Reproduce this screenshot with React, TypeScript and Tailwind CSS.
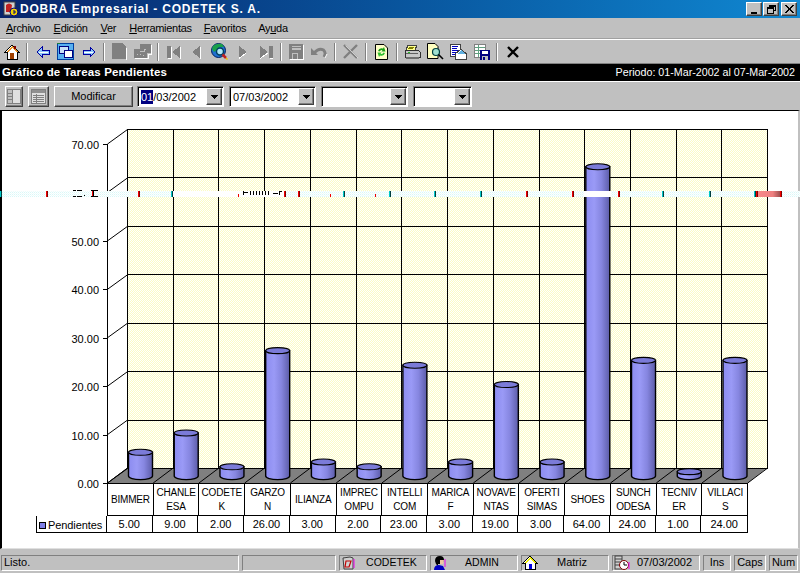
import React from "react";

const raised = "border border-t-white border-l-white border-r-[#404040] border-b-[#404040] shadow-[inset_-1px_-1px_0_#808080]";
const sunken = "border border-t-[#808080] border-l-[#808080] border-r-white border-b-white";

const Sep = () => (
  <div className="w-[8px] h-[18px] flex justify-center">
    <div className="w-[2px] h-full border-l border-l-[#808080] border-r border-r-white" />
  </div>
);

const Ic = ({ children, w = 16, h = 16 }: { children: React.ReactNode; w?: number; h?: number }) => (
  <svg width={w} height={h} viewBox={`0 0 ${w} ${h}`} shapeRendering="crispEdges">{children}</svg>
);

const Home = () => (
  <Ic>
    <path d="M8 1 L15 8 L13 8 L13 15 L3 15 L3 8 L1 8 Z" fill="#fff" stroke="#000" />
    <path d="M8 2 L14 8 L12 8 L8 4 L4 8 L2 8 Z" fill="#e89020" />
    <rect x="6" y="9" width="4" height="6" fill="#a04000" />
    <rect x="10" y="2" width="2" height="3" fill="#800000" />
  </Ic>
);
const ArrowL = () => (
  <Ic w={14} h={12}>
    <path d="M1 6 L6 1 L6 4 L13 4 L13 8 L6 8 L6 11 Z" fill="#8cc8f8" stroke="#0000a0" />
    <path d="M3 6 L12 6" stroke="#fff" />
  </Ic>
);
const ArrowR = () => (
  <Ic w={14} h={12}>
    <path d="M13 6 L8 1 L8 4 L1 4 L1 8 L8 8 L8 11 Z" fill="#8cc8f8" stroke="#0000a0" />
    <path d="M2 6 L11 6" stroke="#fff" />
  </Ic>
);
const Win = () => (
  <Ic w={17} h={17}>
    <rect x="0.5" y="0.5" width="16" height="16" fill="#58b0f0" stroke="#0040a0" />
    <rect x="0" y="0" width="3" height="1" fill="#208040" />
    <rect x="2" y="3" width="9" height="7" fill="#c8e0f8" stroke="#000080" />
    <rect x="7" y="7" width="8" height="7" fill="#fff" stroke="#000080" />
    <rect x="2" y="3" width="9" height="1" fill="#000080" />
    <rect x="7" y="7" width="8" height="1" fill="#000080" />
  </Ic>
);
const GrayDoc = () => (
  <Ic w={15} h={17}>
    <path d="M0 0 H10 L14 4 V16 H0 Z" fill="#808080" />
    <path d="M14 5 V17 H1" stroke="#fff" fill="none" />
  </Ic>
);
const GrayDocs = () => (
  <Ic w={18} h={15}>
    <path d="M6 0 H17 V9 H13 V14 H0 V5 H6 Z" fill="#808080" />
    <path d="M1 14.5 H14 V10 M17.5 1 V10 H14" stroke="#fff" fill="none" />
    <path d="M3 10 h1 M6 10 h1 M9 11 h1 M6 7 h4 V5 h2" stroke="#c0c0c0" fill="none" />
  </Ic>
);
const First = () => (
  <Ic w={14} h={14}>
    <path d="M0 1 H4 V13 H0 Z M13 1 V13 L5 7 Z" fill="#808080" />
    <path d="M4.5 2 V13.5 H1 M13.5 2 V13.5" stroke="#fff" fill="none" />
  </Ic>
);
const Last = () => (
  <Ic w={14} h={14}>
    <path d="M10 1 H14 V13 H10 Z M1 1 V13 L9 7 Z" fill="#808080" />
    <path d="M14.5 2 V13.5 H11 M1 13.5 L9 8" stroke="#fff" fill="none" />
  </Ic>
);
const Prev = () => (
  <Ic w={9} h={14}>
    <path d="M8 1 V13 L0 7 Z" fill="#808080" />
    <path d="M8.5 2 V13.5" stroke="#fff" />
  </Ic>
);
const Next = () => (
  <Ic w={9} h={14}>
    <path d="M1 1 V13 L9 7 Z" fill="#808080" />
    <path d="M1 13.5 L8 8" stroke="#fff" />
  </Ic>
);
const Globe = () => (
  <svg width="17" height="17" viewBox="0 0 17 17">
    <circle cx="7.5" cy="7.5" r="7" fill="#2070d0" stroke="#002060" />
    <path d="M2 3 Q6 0 11 1 L13 4 L8 4 L6 7 L3 9 L1 6 Z" fill="#18a048" />
    <circle cx="9" cy="8.5" r="3.5" fill="#b0e8f8" stroke="#004060" strokeWidth="1.5" />
    <path d="M11.5 11.5 L15 15" stroke="#c02020" strokeWidth="2.5" />
    <path d="M15 15 l1.5 1.5" stroke="#f0c000" strokeWidth="1.5" />
  </svg>
);
const GraySave = () => (
  <Ic w={15} h={16}>
    <rect x="0" y="0" width="14" height="15" fill="#808080" />
    <rect x="3" y="2" width="9" height="4" fill="#c0c0c0" />
    <rect x="3" y="3" width="9" height="1" fill="#808080" />
    <rect x="3" y="9" width="6" height="6" fill="#c0c0c0" />
    <rect x="4" y="10" width="4" height="5" fill="#808080" />
    <path d="M14.5 1 V15.5 H1" stroke="#fff" fill="none" />
  </Ic>
);
const Undo = () => (
  <svg width="17" height="13" viewBox="0 0 17 13">
    <path d="M3.5 7.5 Q8 2.5 12.5 5 Q15.5 8 13 12" fill="none" stroke="#808080" strokeWidth="3" />
    <path d="M0 3 L0 10 L7 10 Z" fill="#808080" />
    <path d="M14 13 L16 9" stroke="#fff" strokeWidth="1" />
  </svg>
);
const GrayX = () => (
  <svg width="15" height="15" viewBox="0 0 15 15">
    <path d="M1 1 L14 14 M14 1 L1 14" stroke="#808080" strokeWidth="2.4" />
    <path d="M2.5 1.5 L15 14" stroke="#fff" strokeWidth="0.6" />
  </svg>
);
const Refresh = () => (
  <svg width="13" height="16" viewBox="0 0 13 16">
    <path d="M0.5 0.5 H9 L12.5 4 V15.5 H0.5 Z" fill="#ffffc8" stroke="#000" />
    <path d="M3 7 Q4 3.5 8 4.5 L9 3 L10.5 7.5 L6.5 7.5 L7.5 6 Q5.5 5.5 4.5 7.5 Z" fill="#18a018" />
    <path d="M10 9 Q9 12.5 5 11.5 L4 13 L2.5 8.5 L6.5 8.5 L5.5 10 Q7.5 10.5 8.5 8.5 Z" fill="#30c030" />
  </svg>
);
const Printer = () => (
  <Ic w={17} h={16}>
    <path d="M4 1 H13 L11 6 H2 Z" fill="#ffff90" stroke="#404040" />
    <path d="M5 3 h5 M4 4 h5" stroke="#808000" />
    <path d="M1 6 H14 L16 8 V13 H1 Z" fill="#c8c8c8" stroke="#303030" />
    <rect x="2" y="9" width="12" height="1" fill="#606060" />
    <rect x="4" y="8" width="2" height="1" fill="#20c020" />
    <rect x="2" y="13" width="13" height="2" fill="#707070" />
  </Ic>
);
const Preview = () => (
  <svg width="17" height="17" viewBox="0 0 17 17">
    <path d="M0.5 0.5 H8 L11 3.5 V15.5 H0.5 Z" fill="#ffffc0" stroke="#000" />
    <circle cx="9" cy="9" r="3.5" fill="#a0e0d0" stroke="#004040" strokeWidth="1.2" />
    <path d="M11.5 11.5 L16 16" stroke="#000" strokeWidth="1.6" />
  </svg>
);
const Mail = () => (
  <Ic w={17} h={16}>
    <rect x="0.5" y="0.5" width="10" height="12" fill="#fff" stroke="#404040" />
    <path d="M2 2 h6 M2 4 h5 M2 6 h6 M2 8 h4 M2 10 h4" stroke="#0000c0" />
    <path d="M5 15.5 V10 L11 5 L16.5 10 V15.5 Z" fill="#fff" stroke="#404040" />
    <path d="M7 10 L11 6 L15 10 Z" fill="#60b0e0" />
  </Ic>
);
const SaveDb = () => (
  <Ic w={16} h={16}>
    <rect x="0.5" y="0.5" width="11" height="13" fill="#fff" stroke="#808080" />
    <path d="M1 3 h10 M1 6 h7 M1 9 h6 M4 1 v12" stroke="#60a080" />
    <rect x="6" y="6" width="10" height="10" fill="#000080" />
    <rect x="8" y="7" width="6" height="3" fill="#fff" />
    <rect x="8" y="12" width="6" height="4" fill="#c0c0c0" />
    <rect x="9" y="13" width="2" height="3" fill="#000080" />
  </Ic>
);
const CloseX = () => (
  <svg width="12" height="12" viewBox="0 0 12 12">
    <path d="M1 1 L11 11 M11 1 L1 11" stroke="#000" strokeWidth="2.4" />
  </svg>
);

const Btn = ({ children }: { children: React.ReactNode }) => (
  <div className="w-[23px] h-[23px] flex items-center justify-center">{children}</div>
);

const TitleBtn = ({ children, cls }: { children: React.ReactNode; cls: string }) => (
  <div className={`w-[16px] h-[14px] bg-[#c0c0c0] flex items-center justify-center ${raised} ${cls}`}>{children}</div>
);

const Combo = ({ w, value, sel }: { w: string; value?: string; sel?: boolean }) => (
  <div className={`${w} h-[21px] bg-white flex items-center ${sunken} shadow-[inset_1px_1px_0_#000]`}>
    <div className="flex-1 pl-[3px] pt-px text-[11px] leading-none text-black whitespace-nowrap">
      {sel ? <><span className="bg-[#000080] text-white py-px">01</span>/03/2002</> : value}
    </div>
    <div className={`w-[16px] h-[17px] mr-px bg-[#c0c0c0] flex items-center justify-center ${raised}`}>
      <svg width="7" height="4" viewBox="0 0 7 4" shapeRendering="crispEdges"><path d="M0 0 H7 L3.5 4 Z" fill="#000" /></svg>
    </div>
  </div>
);

const Panel = ({ w, children, cls = "" }: { w: string; children?: React.ReactNode; cls?: string }) => (
  <div className={`${w} h-[16px] flex items-center text-[11px] leading-none text-black ${sunken} ${cls}`}>{children}</div>
);

const values = [5, 9, 2, 26, 3, 2, 23, 3, 19, 3, 64, 24, 1, 24];
const names: [string, string?][] = [
  ["BIMMER"], ["CHANLE", "ESA"], ["CODETE", "K"], ["GARZO", "N"], ["ILIANZA"], ["IMPREC", "OMPU"], ["INTELLI", "COM"],
  ["MARICA", "F"], ["NOVAVE", "NTAS"], ["OFERTI", "SIMAS"], ["SHOES"], ["SUNCH", "ODESA"], ["TECNIV", "ER"], ["VILLACI", "S"],
];
const STEP = 45.73;
const redTicks = [46, 92, 138, 284, 298, 526, 572, 618, 756, 780];
const cyanTicks = [0, 171, 343, 389, 434, 480, 662, 709, 754];
const smallRed = [238, 330, 375];

function Chart() {
  const wallY = Array.from({ length: 8 }, (_, i) => 130 + i * 48.43);
  const cols = Array.from({ length: 15 }, (_, i) => i);
  return (
    <svg width="796" height="372" viewBox="2 112 796 372" className="block overflow-visible">
      <defs>
        <pattern id="wall" width="2" height="2" patternUnits="userSpaceOnUse">
          <rect width="2" height="2" fill="#fff" />
          <rect width="1" height="1" fill="#fcfcc4" />
          <rect x="1" y="1" width="1" height="1" fill="#fcfcc4" />
        </pattern>
        <linearGradient id="bar" x1="0" x2="1" y1="0" y2="0">
          <stop offset="0" stopColor="#8c8cf0" />
          <stop offset="0.35" stopColor="#9a9af6" />
          <stop offset="0.65" stopColor="#8686e0" />
          <stop offset="1" stopColor="#5c5ca8" />
        </linearGradient>
      </defs>
      <rect x="127" y="130" width="640" height="339" fill="url(#wall)" />
      <polygon points="107,484 127,469 767,469 748,484" fill="#808080" />
      <g stroke="#000" shapeRendering="crispEdges" fill="none">
        {wallY.map((y) => <line key={y} x1="127" x2="767.5" y1={Math.round(y) + 0.5} y2={Math.round(y) + 0.5} />)}
        {cols.map((i) => <line key={i} x1={Math.round(127 + i * STEP) + 0.5} x2={Math.round(127 + i * STEP) + 0.5} y1="130" y2="469" />)}
        <line x1="107.5" x2="107.5" y1="145" y2="484" />
      </g>
      <g stroke="#000" fill="none">
        {wallY.map((y, i) => <line key={i} x1="107.5" x2="127.5" y1={y + 15} y2={y + 0.5} />)}
        {wallY.map((y, i) => <line key={`t${i}`} x1="103" x2="107.5" y1={Math.round(y + 15) + 0.5} y2={Math.round(y + 15) + 0.5} />)}
        {cols.map((i) => <line key={i} x1={107.5 + i * STEP} x2={127.5 + i * STEP} y1="484" y2="469" />)}
      </g>
      <g fontSize="11" fill="#000" textAnchor="end">
        {[70, 50, 40, 30, 20, 10, 0].map((v) => (
          <text key={v} x="99" y={484 - v * 4.843 + 5}>{v.toFixed(2)}</text>
        ))}
      </g>
      {values.map((v, i) => {
        const cx = 140.5 + i * STEP;
        const top = 477.5 - v * 4.84;
        return (
          <g key={i} stroke="#000">
            <path d={`M${cx - 12} ${top} L${cx - 12} 477 A12 3.6 0 0 0 ${cx + 12} 477 L${cx + 12} ${top} Z`} fill="url(#bar)" strokeWidth="1.4" />
            <ellipse cx={cx} cy={top} rx="12" ry="3" fill="#7b7bd8" strokeWidth="1.1" />
          </g>
        );
      })}
    </svg>
  );
}

function Band() {
  return (
    <svg width="800" height="7" viewBox="0 190 800 7" shapeRendering="crispEdges" className="absolute left-0 top-[190px] block">
      <defs>
        <pattern id="dither" width="2" height="2" patternUnits="userSpaceOnUse">
          <rect width="2" height="2" fill="#fff" />
          <rect width="1" height="1" fill="#d8f8f8" />
          <rect x="1" y="1" width="1" height="1" fill="#ecfcfc" />
        </pattern>
        <linearGradient id="pink" x1="0" x2="1" y1="0" y2="0">
          <stop offset="0" stopColor="#f88a8a" />
          <stop offset="0.7" stopColor="#ee8080" />
          <stop offset="1" stopColor="#a05050" />
        </linearGradient>
      </defs>
      <rect x="0" y="191" width="800" height="6" fill="url(#dither)" />
      <rect x="172" y="191" width="114" height="6" fill="#fff" />
      <rect x="584" y="191" width="27" height="6" fill="#fff" />
      <rect x="756" y="191" width="24" height="6" fill="url(#pink)" />
      {redTicks.map((x) => <rect key={x} x={x} y="191" width="1" height="6" fill="#f00000" />)}
      {redTicks.map((x) => <rect key={`b${x}`} x={x + 1} y="191" width="1" height="6" fill="#800000" />)}
      {cyanTicks.map((x) => <rect key={x} x={x} y="191" width="1" height="6" fill="#00c8c8" />)}
      {cyanTicks.map((x) => <rect key={`k${x}`} x={x + 1} y="191" width="1" height="6" fill="#004040" />)}
      {smallRed.map((x) => <rect key={x} x={x} y="194" width="1" height="3" fill="#f00000" />)}
      <g fill="#000">
        <rect x="73" y="190" width="3" height="1" /><rect x="77" y="190" width="5" height="1" />
        <rect x="73" y="196" width="3" height="1" /><rect x="77" y="196" width="5" height="1" />
        <rect x="91" y="190" width="7" height="1" /><rect x="91" y="196" width="7" height="1" />
        <rect x="84" y="195" width="1" height="1" /><rect x="93" y="191" width="1" height="5" />
        <rect x="243" y="191" width="1" height="4" /><rect x="244" y="192" width="4" height="1" />
        <rect x="250" y="191" width="1" height="4" /><rect x="253" y="191" width="1" height="4" />
        <rect x="256" y="191" width="1" height="4" /><rect x="259" y="191" width="1" height="4" />
        <rect x="262" y="191" width="1" height="4" /><rect x="265" y="191" width="1" height="4" />
        <rect x="268" y="191" width="1" height="4" /><rect x="273" y="193" width="5" height="1" />
        <rect x="279" y="191" width="1" height="4" /><rect x="280" y="191" width="2" height="1" />
      </g>
    </svg>
  );
}

export default function App() {
  return (
    <div className="w-[800px] h-[573px] overflow-hidden relative flex flex-col bg-[#c0c0c0] [font-family:'Liberation_Sans',Arial,sans-serif] text-black">
      {/* title bar */}
      <div className="h-[18px] flex items-center bg-linear-to-r from-[#08246b] to-[#1088d2] pl-[3px] pr-[3px]">
        <svg width="16" height="16" viewBox="0 0 16 16" className="shrink-0">
          <rect x="1" y="1" width="11" height="13" fill="#d0d0d0" stroke="#404040" />
          <path d="M3 4 Q6 1 9 4 L8 11 L3 11 Z" fill="#c02020" />
          <circle cx="11" cy="11" r="4" fill="#f0d000" stroke="#000080" />
          <path d="M10 10 h2 v2 h-2" stroke="#000080" fill="none" />
        </svg>
        <div className="ml-px text-white text-[12px] tracking-[0.8px] font-bold leading-none whitespace-nowrap flex-1">DOBRA Empresarial - CODETEK S. A.</div>
        <TitleBtn cls="mr-[1px]">
          <div className="w-[6px] h-[2px] bg-black mt-[7px] -ml-[1px]" />
        </TitleBtn>
        <TitleBtn cls="mr-[2px]">
          <svg width="9" height="9" viewBox="0 0 9 9" shapeRendering="crispEdges"><path d="M2.5 2 V0.5 H8.5 V5.5 H6.5 M0.5 2.5 H6.5 V8.5 H0.5 Z M2.5 1 H8.5 M0.5 3 H6.5" fill="none" stroke="#000" /></svg>
        </TitleBtn>
        <TitleBtn cls="">
          <svg width="9" height="8" viewBox="0 0 9 8" shapeRendering="crispEdges"><path d="M0 0 H2 L4.5 3 L7 0 H9 L5.5 4 L9 8 H7 L4.5 5 L2 8 H0 L3.5 4 Z" fill="#000" /></svg>
        </TitleBtn>
      </div>
      {/* menu */}
      <div className="h-[20px] flex items-center text-[11px] tracking-[-0.3px] leading-none text-black">
        <span className="ml-[6px]"><u>A</u>rchivo</span>
        <span className="ml-[13px]"><u>E</u>dición</span>
        <span className="ml-[13px]"><u>V</u>er</span>
        <span className="ml-[13px]"><u>H</u>erramientas</span>
        <span className="ml-[12px]"><u>F</u>avoritos</span>
        <span className="ml-[12px]">Ay<u>u</u>da</span>
      </div>
      <div className="h-[2px] bg-white border-t border-t-[#a0a0a0]" />
      {/* toolbar */}
      <div className="h-[23px] flex items-center">
        <Btn><Home /></Btn><Sep />
        <Btn><ArrowL /></Btn><Btn><Win /></Btn><Btn><ArrowR /></Btn><Sep />
        <Btn><GrayDoc /></Btn><Btn><GrayDocs /></Btn><Sep />
        <Btn><First /></Btn><Btn><Prev /></Btn><Btn><Globe /></Btn><Btn><Next /></Btn><Btn><Last /></Btn><Sep />
        <Btn><GraySave /></Btn><Btn><Undo /></Btn><Sep />
        <Btn><GrayX /></Btn><Sep />
        <Btn><Refresh /></Btn><Sep />
        <Btn><Printer /></Btn><Btn><Preview /></Btn><Btn><Mail /></Btn><Btn><SaveDb /></Btn><Sep />
        <Btn><CloseX /></Btn>
      </div>
      <div className="h-px bg-[#808080]" />
      {/* header band */}
      <div className="h-[17px] bg-black text-white flex items-center justify-between pl-[2px] pr-[5px] text-[10.7px] leading-none whitespace-nowrap">
        <span className="font-bold text-[11.5px] tracking-[0.15px]">Gráfico de Tareas Pendientes</span>
        <span>Periodo: 01-Mar-2002 al 07-Mar-2002</span>
      </div>
      <div className="h-px bg-white" />
      {/* filters */}
      <div className="h-[28px] flex items-center pl-[5px] pt-[1px]">
        <div className={`w-[18px] h-[21px] flex items-center justify-center ${raised}`}>
          <svg width="14" height="15" viewBox="0 0 14 15" shapeRendering="crispEdges">
            <rect x="0.5" y="0.5" width="13" height="14" fill="#c0c0c0" stroke="#808080" />
            <rect x="5.5" y="0.5" width="8" height="14" fill="#e0e0e0" stroke="#808080" />
            <path d="M1 4 h4 M1 7 h4 M1 10 h4" stroke="#808080" />
          </svg>
        </div>
        <div className={`w-[21px] h-[21px] ml-[5px] flex items-center justify-center ${raised}`}>
          <svg width="15" height="15" viewBox="0 0 15 15" shapeRendering="crispEdges">
            <rect x="0.5" y="0.5" width="14" height="14" fill="#e0e0e0" stroke="#808080" />
            <rect x="1" y="1" width="13" height="3" fill="#909090" />
            <path d="M2 6.5 h11 M2 8.5 h11 M2 10.5 h11 M2 12.5 h11 M5.5 5 v9" stroke="#808080" />
          </svg>
        </div>
        <div className={`w-[79px] h-[21px] ml-[5px] text-[11px] leading-none flex items-center justify-center ${raised}`}>Modificar</div>
        <div className="ml-[4px]"><Combo w="w-[87px]" sel /></div>
        <div className="ml-[5px]"><Combo w="w-[87px]" value="07/03/2002" /></div>
        <div className="ml-[5px]"><Combo w="w-[87px]" /></div>
        <div className="ml-[5px]"><Combo w="w-[59px]" /></div>
      </div>
      {/* chart panel */}
      <div className="h-[439px] bg-white border-t border-t-black border-l-2 border-l-black border-r-2 border-r-[#c0c0c0] border-b border-b-[#e0e0e0]">
        <Chart />
        <div className="ml-[105px] w-[641px] grid grid-cols-[repeat(14,45.73px)] h-[33px] border border-black text-[10px] tracking-[-0.2px] leading-[14px] text-center bg-white">
          {names.map((n, i) => (
            <div key={i} className={`flex flex-col items-center justify-center whitespace-nowrap overflow-hidden ${i < 13 ? "border-r border-r-black" : ""}`}>
              <span>{n[0]}</span>
              {n[1] ? <span>{n[1]}</span> : null}
            </div>
          ))}
        </div>
        <div className="flex ml-[34px] h-[17px] border border-t-0 border-black w-[712px] text-[11px] leading-none bg-white">
          <div className="w-[70px] flex items-center pl-[2px] gap-[2px] border-r border-r-black pt-[2px]">
            <div className="w-[5px] h-[5px] bg-[#8080e8] border border-black box-content" />
            <span className="tracking-[-0.1px]">Pendientes</span>
          </div>
          <div className="grid grid-cols-[repeat(14,45.73px)] flex-1">
            {values.map((v, i) => (
              <div key={i} className={`flex items-center justify-center pt-[1px] ${i < 13 ? "border-r border-r-black" : ""}`}>{v.toFixed(2)}</div>
            ))}
          </div>
        </div>
      </div>
      <Band />
      {/* status bar */}
      <div className="flex-1 flex items-center pl-[1px] pt-[3px] gap-[3px]">
        <Panel w="w-[238px]" cls="pl-[2px]">Listo.</Panel>
        <Panel w="w-[94px]" />
        <Panel w="w-[88px]">
          <svg width="14" height="14" viewBox="0 0 14 14" className="ml-[1px] shrink-0">
            <path d="M2 2 L9 1 L12 2 V13 L3 13 Z" fill="#d0d0d0" stroke="#404040" />
            <path d="M5 5 H10 L8 11 H4 Z" fill="none" stroke="#c00000" strokeWidth="1.2" />
            <path d="M13 3 V12" stroke="#f000f0" />
          </svg>
          <span className="flex-1 text-center text-[10.5px] pl-[2px]">CODETEK</span>
        </Panel>
        <Panel w="w-[88px]">
          <svg width="14" height="15" viewBox="0 0 14 15" className="ml-[2px] shrink-0">
            <path d="M2 6 Q2 1 7 1 Q11 1 11 5 L9 9 L5 9 L5 11 L3 9 Z" fill="#000" />
            <path d="M7 5 L11 5 L10 9 L7 9 Z" fill="#f0c8a0" />
            <path d="M1 15 Q1 10 6 10 L10 11 L12 15 Z" fill="#0000c0" />
            <path d="M12 4 V12" stroke="#f000f0" />
          </svg>
          <span className="flex-1 text-center text-[10.5px]">ADMIN</span>
        </Panel>
        <Panel w="w-[88px]">
          <svg width="16" height="15" viewBox="0 0 16 15" className="shrink-0" shapeRendering="crispEdges">
            <path d="M8 1 L15 8 L13 8 L13 14 L3 14 L3 8 L1 8 Z" fill="#fff" stroke="#000" />
            <path d="M8 2 L14 8 L12 8 L8 4 L4 8 L2 8 Z" fill="#f0f000" />
            <rect x="7" y="9" width="3" height="5" fill="#0000e0" />
          </svg>
          <span className="flex-1 text-center pr-[2px]">Matriz</span>
        </Panel>
        <Panel w="w-[88px]">
          <svg width="16" height="15" viewBox="0 0 16 15" className="shrink-0 ml-[1px]">
            <rect x="1" y="1" width="7" height="13" fill="#d0d0d0" stroke="#404040" />
            <path d="M1 4 h7 M1 7 h7 M1 10 h7" stroke="#404040" />
            <circle cx="10" cy="10" r="4.5" fill="#fff" stroke="#800000" />
            <path d="M10 7 V10 H13" stroke="#000" fill="none" />
            <path d="M15 7 V14" stroke="#f000f0" />
          </svg>
          <span className="flex-1 text-center">07/03/2002</span>
        </Panel>
        <Panel w="w-[28px]" cls="justify-center">Ins</Panel>
        <Panel w="w-[32px]" cls="justify-center text-[#808080]">Caps</Panel>
        <Panel w="w-[29px]" cls="justify-center">Num</Panel>
      </div>
    </div>
  );
}
